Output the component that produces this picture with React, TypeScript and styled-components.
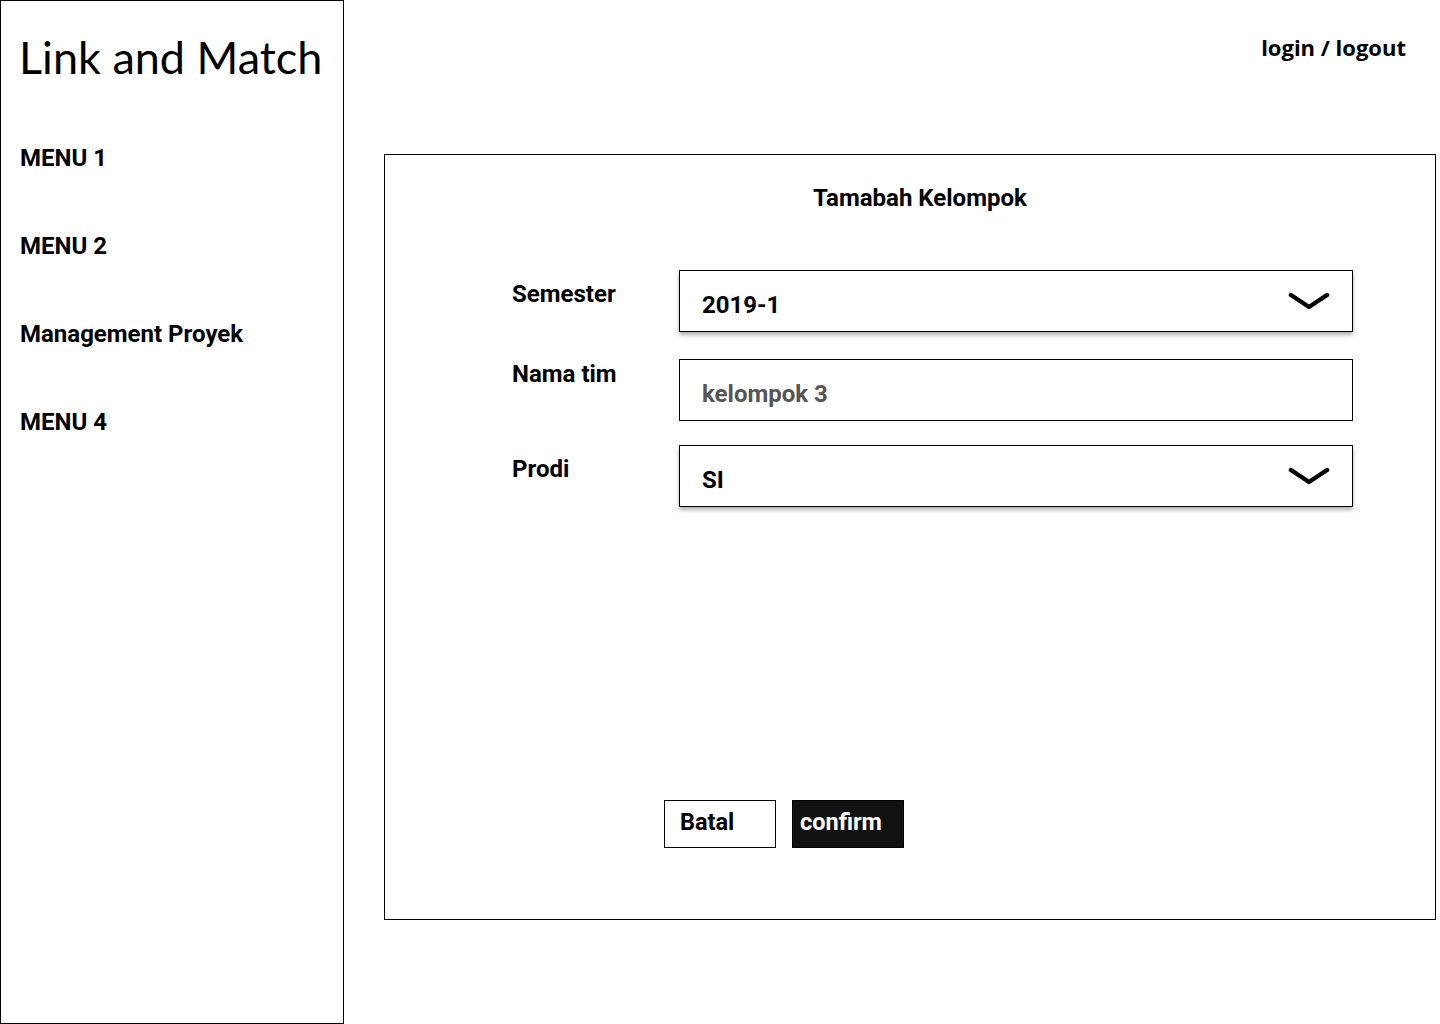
import React from "react";
import styled, { createGlobalStyle } from "styled-components";

const GlobalStyle = createGlobalStyle`
  html, body {
    margin: 0;
    padding: 0;
    background: #ffffff;
  }
  body {
    font-family: Roboto, "Liberation Sans", sans-serif;
    color: #000;
  }
`;

const Page = styled.div`
  display: flex;
  width: 1440px;
  height: 1024px;
  box-sizing: border-box;
`;

const Sidebar = styled.aside`
  width: 344px;
  height: 1024px;
  box-sizing: border-box;
  border: 1px solid #000;
  padding: 29px 0 0 19px;
  flex-shrink: 0;
`;

const Brand = styled.h1`
  margin: 0 0 60px -1px;
  font-family: Lato, "Open Sans", sans-serif;
  font-weight: 400;
  font-size: 45px;
  line-height: 54px;
`;

const MenuList = styled.nav`
  display: flex;
  flex-direction: column;
  gap: 60px;
`;

const MenuItem = styled.a`
  font-family: Roboto, sans-serif;
  font-weight: 700;
  font-size: 24px;
  line-height: 28px;
  color: #000;
`;

const Main = styled.main`
  flex: 1;
  display: flex;
  flex-direction: column;
  padding: 0 4px 0 40px;
`;

const Header = styled.header`
  display: flex;
  justify-content: flex-end;
  padding: 32px 30px 0 0;
  height: 154px;
  box-sizing: border-box;
`;

const AuthLink = styled.a`
  font-family: "Open Sans", sans-serif;
  font-weight: 700;
  font-size: 22px;
  line-height: 30px;
  color: #000;
`;

const Panel = styled.section`
  width: 1052px;
  height: 766px;
  box-sizing: border-box;
  border: 1px solid #000;
  display: flex;
  flex-direction: column;
  padding: 29px 0 0 127px;
`;

const PanelTitle = styled.h2`
  margin: 0 0 58px 301px;
  font-family: Roboto, sans-serif;
  font-weight: 700;
  font-size: 24px;
  line-height: 28px;
`;

const FormRow = styled.div<{ $gap: number }>`
  display: flex;
  align-items: flex-start;
  margin-bottom: ${(p) => p.$gap}px;
`;

const Label = styled.label<{ $offset: number }>`
  width: 167px;
  flex-shrink: 0;
  padding-top: ${(p) => p.$offset}px;
  font-family: Roboto, sans-serif;
  font-weight: 700;
  font-size: 24px;
  line-height: 26px;
`;

const Field = styled.div<{ $shadow?: boolean }>`
  width: 674px;
  height: 62px;
  box-sizing: border-box;
  border: 1px solid #000;
  background: #fff;
  display: flex;
  align-items: center;
  justify-content: space-between;
  padding: 8px 21px 0 22px;
  box-shadow: ${(p) => (p.$shadow ? "0 3px 4px rgba(0, 0, 0, 0.3)" : "none")};
`;

const FieldText = styled.span<{ $muted?: boolean }>`
  font-family: Roboto, sans-serif;
  font-weight: 700;
  font-size: 24px;
  color: ${(p) => (p.$muted ? "#555555" : "#000")};
`;

const Chevron = styled.svg`
  margin-top: -9px;
`;

const Actions = styled.div`
  display: flex;
  gap: 16px;
  margin: 293px 0 0 152px;
`;

const Button = styled.button<{ $primary?: boolean }>`
  width: 112px;
  height: 48px;
  box-sizing: border-box;
  border: 1px solid #000;
  background: ${(p) => (p.$primary ? "#111111" : "#ffffff")};
  color: ${(p) => (p.$primary ? "#ffffff" : "#000")};
  font-family: Roboto, sans-serif;
  font-weight: 700;
  font-size: 23.5px;
  text-align: left;
  padding: 0 0 4px ${(p) => (p.$primary ? 7 : 15)}px;
  cursor: pointer;
`;

const ChevronIcon = () => (
  <Chevron width="44" height="18" viewBox="0 0 44 18">
    <polyline
      points="4,3 22,15 40,3"
      fill="none"
      stroke="#000"
      strokeWidth="4.5"
      strokeLinecap="round"
      strokeLinejoin="round"
    />
  </Chevron>
);

export default function App() {
  return (
    <>
      <GlobalStyle />
      <Page>
        <Sidebar>
          <Brand>Link and Match</Brand>
          <MenuList>
            <MenuItem>MENU 1</MenuItem>
            <MenuItem>MENU 2</MenuItem>
            <MenuItem>Management Proyek</MenuItem>
            <MenuItem>MENU 4</MenuItem>
          </MenuList>
        </Sidebar>
        <Main>
          <Header>
            <AuthLink>login / logout</AuthLink>
          </Header>
          <Panel>
            <PanelTitle>Tamabah Kelompok</PanelTitle>
            <FormRow $gap={27}>
              <Label $offset={11}>Semester</Label>
              <Field $shadow>
                <FieldText>2019-1</FieldText>
                <ChevronIcon />
              </Field>
            </FormRow>
            <FormRow $gap={24}>
              <Label $offset={2}>Nama tim</Label>
              <Field>
                <FieldText $muted>kelompok 3</FieldText>
              </Field>
            </FormRow>
            <FormRow $gap={0}>
              <Label $offset={11}>Prodi</Label>
              <Field $shadow>
                <FieldText>SI</FieldText>
                <ChevronIcon />
              </Field>
            </FormRow>
            <Actions>
              <Button>Batal</Button>
              <Button $primary>confirm</Button>
            </Actions>
          </Panel>
        </Main>
      </Page>
    </>
  );
}
